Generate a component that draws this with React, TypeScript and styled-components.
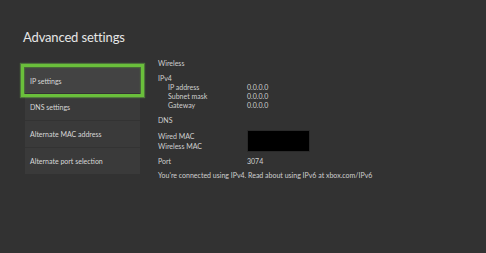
import React from "react";
import styled, { createGlobalStyle } from "styled-components";

const Global = createGlobalStyle`
  html, body { margin: 0; padding: 0; background: #323232; }
  body { font-family: Lato, "Open Sans", sans-serif; color: #d6d6d6; }
`;

const Page = styled.div`
  width: 486px;
  height: 253px;
  box-sizing: border-box;
  padding: 27px 0 0 23px;
  background: #323232;
  overflow: hidden;
`;

const Title = styled.h1`
  margin: 0;
  font-weight: 400;
  font-size: 13px;
  line-height: 20px;
  color: #e6e6e6;
  letter-spacing: -0.15px;
`;

const Body = styled.div`
  display: flex;
  gap: 18px;
  margin-top: 12px;
  padding-left: 2px;
`;

const Menu = styled.div`
  width: 115px;
  margin-top: 9px;
  align-self: flex-start;
  display: flex;
  flex-direction: column;
  background: #3a3a3a;
`;

const Item = styled.div<{ $selected?: boolean }>`
  position: relative;
  height: ${(p) => (p.$selected ? 25 : 26)}px;
  display: flex;
  align-items: center;
  padding-left: 5px;
  font-size: 7px;
  color: #d8d8d8;
  background: ${(p) => (p.$selected ? "#434343" : "transparent")};
  & + & { border-top: 1px solid #333333; }
  ${(p) =>
    p.$selected &&
    `
    &::after {
      content: "";
      position: absolute;
      inset: -4px;
      border: 3px solid #6abf3b;
      box-shadow: 0 0 1px 1px rgba(110, 200, 70, 0.45), inset 0 0 1px 1px rgba(110, 200, 70, 0.4);
    }
  `}
`;

const Details = styled.div`
  display: flex;
  flex-direction: column;
  font-size: 7px;
  line-height: 9px;
  color: #d0d0d0;
`;

const Heading = styled.div<{ $mt?: number }>`
  margin-top: ${(p) => p.$mt ?? 0}px;
`;

const Row = styled.div<{ $indent?: boolean; $mt?: number }>`
  display: grid;
  grid-template-columns: ${(p) => (p.$indent ? "10px 79px auto" : "0 89px auto")};
  margin-top: ${(p) => p.$mt ?? 0}px;
`;

const MacBlock = styled.div`
  display: grid;
  grid-template-columns: 89px auto;
  align-items: center;
  margin-top: 5px;
`;

const MacLabels = styled.div`
  display: flex;
  flex-direction: column;
  line-height: 10px;
`;

const Redacted = styled.div`
  width: 61px;
  height: 20px;
  background: #000;
  border: 1px solid #2a2a2a;
`;

const Footer = styled.div`
  margin-top: 5px;
  white-space: nowrap;
`;

export default function App() {
  return (
    <Page>
      <Global />
      <Title>Advanced settings</Title>
      <Body>
        <Menu>
          <Item $selected>IP settings</Item>
          <Item>DNS settings</Item>
          <Item>Alternate MAC address</Item>
          <Item>Alternate port selection</Item>
        </Menu>
        <Details>
          <Heading>Wireless</Heading>
          <Heading $mt={6}>IPv4</Heading>
          <Row $indent>
            <span />
            <span>IP address</span>
            <span>0.0.0.0</span>
          </Row>
          <Row $indent>
            <span />
            <span>Subnet mask</span>
            <span>0.0.0.0</span>
          </Row>
          <Row $indent>
            <span />
            <span>Gateway</span>
            <span>0.0.0.0</span>
          </Row>
          <Heading $mt={6}>DNS</Heading>
          <MacBlock>
            <MacLabels>
              <span>Wired MAC</span>
              <span>Wireless MAC</span>
            </MacLabels>
            <Redacted />
          </MacBlock>
          <Row $mt={5}>
            <span />
            <span>Port</span>
            <span>3074</span>
          </Row>
          <Footer>You're connected using IPv4. Read about using IPv6 at xbox.com/IPv6</Footer>
        </Details>
      </Body>
    </Page>
  );
}
